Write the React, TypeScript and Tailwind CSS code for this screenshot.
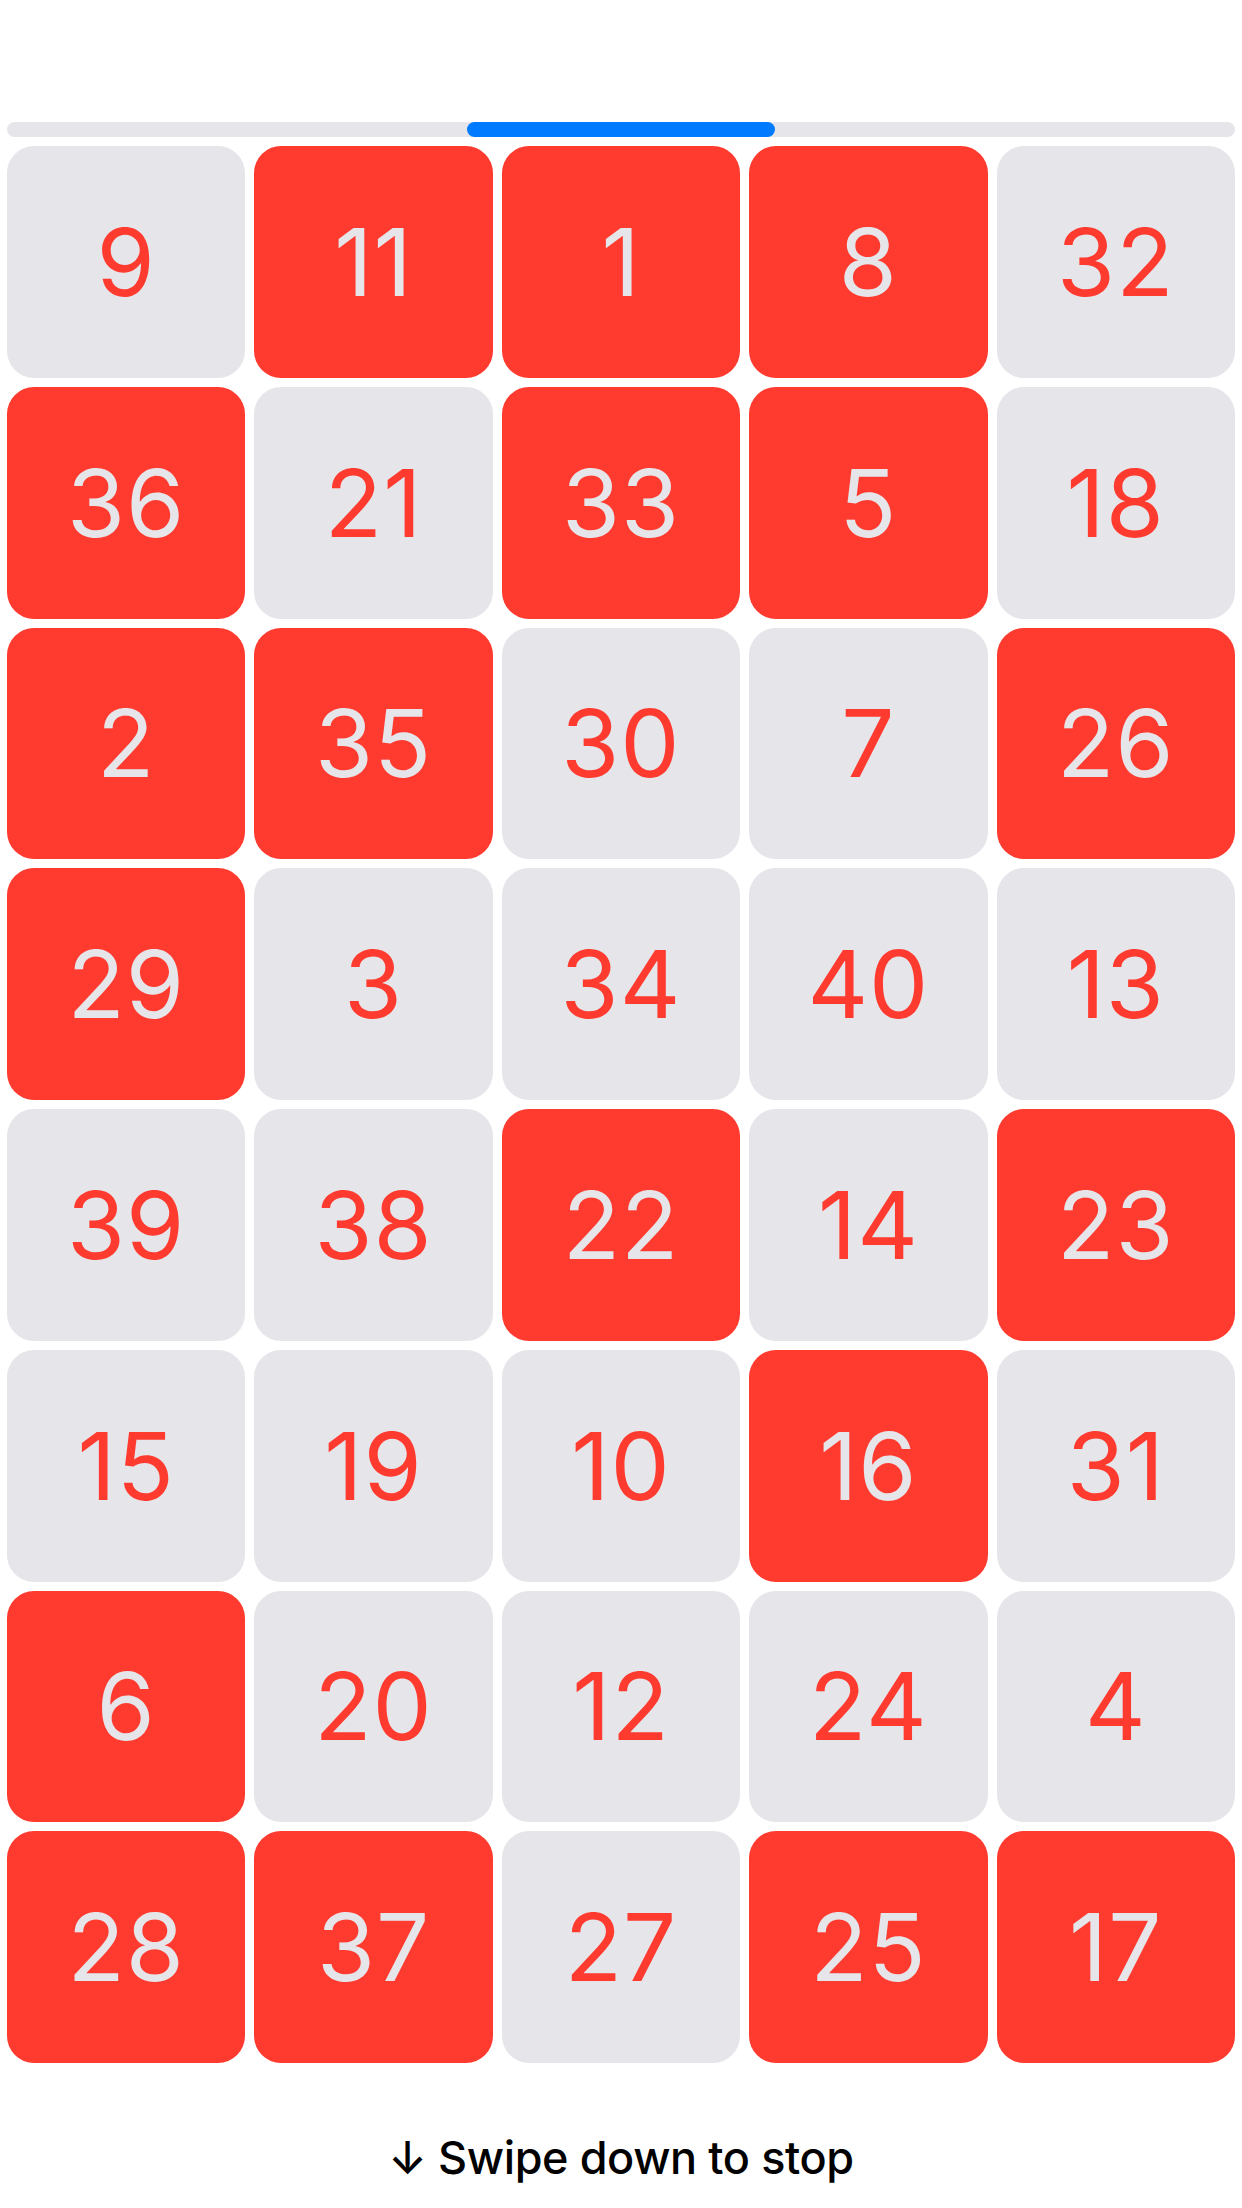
import React from "react";

const cells: [number, boolean][] = [
  [9, false], [11, true], [1, true], [8, true], [32, false],
  [36, true], [21, false], [33, true], [5, true], [18, false],
  [2, true], [35, true], [30, false], [7, false], [26, true],
  [29, true], [3, false], [34, false], [40, false], [13, false],
  [39, false], [38, false], [22, true], [14, false], [23, true],
  [15, false], [19, false], [10, false], [16, true], [31, false],
  [6, true], [20, false], [12, false], [24, false], [4, false],
  [28, true], [37, true], [27, false], [25, true], [17, true],
];

export default function App() {
  return (
    <div
      className="w-[1242px] h-[2208px] bg-white flex flex-col px-[7px] overflow-hidden"
      style={{ fontFamily: "Inter, 'Liberation Sans', sans-serif" }}
    >
      <div className="mt-[122px] h-[15px] rounded-full bg-[#e5e5ea] flex">
        <div className="ml-[460px] w-[308px] h-full rounded-full bg-[#007aff]" />
      </div>
      <div className="mt-[9px] grid grid-cols-5 grid-rows-8 gap-[9px] h-[1917px]">
        {cells.map(([n, red]) => (
          <div
            key={n}
            className={
              red
                ? "rounded-[27px] bg-[#ff3b30] text-[#e5e5ea] flex items-center justify-center"
                : "rounded-[27px] bg-[#e5e5ea] text-[#ff3b30] flex items-center justify-center"
            }
          >
            <span className="text-[94px] leading-none font-normal tracking-[1px]">{n}</span>
          </div>
        ))}
      </div>
      <div className="flex-1 flex items-start justify-center pt-[72px]">
        <span className="text-[45px] leading-none font-medium text-black tracking-[-0.4px]">
          ↓ Swipe down to stop
        </span>
      </div>
    </div>
  );
}
